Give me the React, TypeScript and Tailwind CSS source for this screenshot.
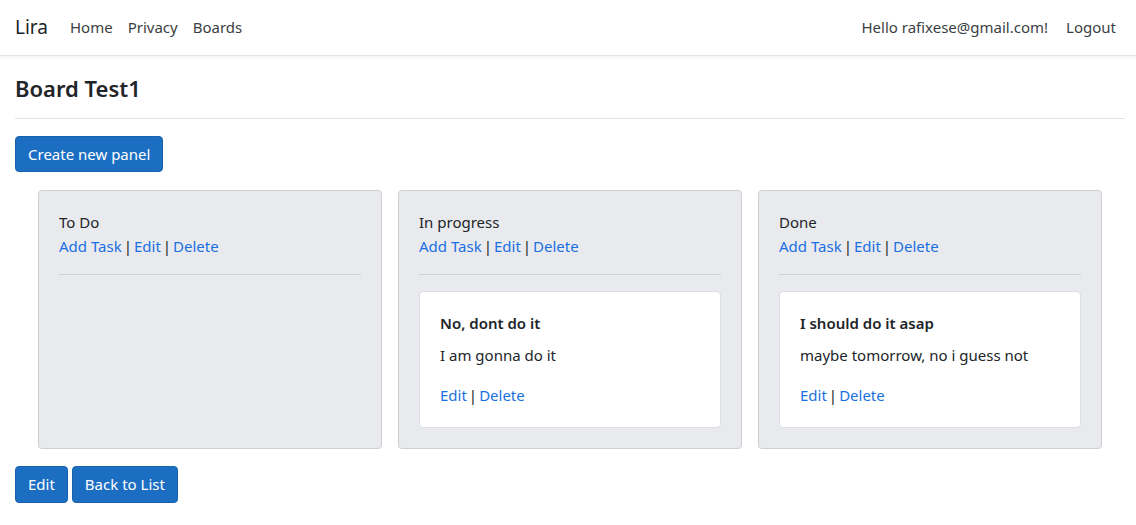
import React from "react";

type Task = { title: string; body: string };
type Panel = { name: string; tasks: Task[] };

const panels: Panel[] = [
  { name: "To Do", tasks: [] },
  { name: "In progress", tasks: [{ title: "No, dont do it", body: "I am gonna do it" }] },
  { name: "Done", tasks: [{ title: "I should do it asap", body: "maybe tomorrow, no i guess not" }] },
];

function Links({ items }: { items: string[] }) {
  return (
    <div className="leading-6">
      {items.map((t, i) => (
        <span key={t}>
          {i > 0 && <span className="text-[#212529] mx-[2px]">|</span>}
          <a className="text-[#1a6fe0] cursor-pointer">{t}</a>
        </span>
      ))}
    </div>
  );
}

function TaskCard({ task }: { task: Task }) {
  return (
    <div className="bg-white border border-[#dcdde1] rounded-[4px] px-5 pt-[19px] pb-5 flex flex-col">
      <div className="font-semibold leading-6">{task.title}</div>
      <div className="leading-6 mt-2">{task.body}</div>
      <div className="mt-4">
        <Links items={["Edit", "Delete"]} />
      </div>
    </div>
  );
}

function PanelCard({ panel }: { panel: Panel }) {
  return (
    <div className="w-[344px] h-[259px] bg-[#e9eaee] border border-[#cdcfd3] rounded-[4px] px-5 pt-[19px]">
      <div className="leading-6">{panel.name}</div>
      <Links items={["Add Task", "Edit", "Delete"]} />
      <div className="h-px bg-[#cfd1d5] mt-4 mb-4" />
      {panel.tasks.map((t) => (
        <TaskCard key={t.title} task={t} />
      ))}
    </div>
  );
}

export default function App() {
  return (
    <div className="min-h-screen bg-white text-[#212529] text-[15px] font-['Noto_Sans',sans-serif]">
      <nav className="h-14 flex items-center px-[15px] border-b border-[#e5e5e5] shadow-[0_2px_4px_rgba(0,0,0,0.05)]">
        <span className="text-[19px] mr-[22px] text-[#212529]">Lira</span>
        <div className="flex gap-[15px] text-[#3b3f44]">
          <a>Home</a>
          <a>Privacy</a>
          <a>Boards</a>
        </div>
        <div className="ml-auto flex items-center gap-[18px] pr-[5px] text-[#3b3f44]">
          <span>Hello rafixese@gmail.com!</span>
          <a>Logout</a>
        </div>
      </nav>
      <main className="px-[15px]">
        <h1 className="text-[22px] font-semibold leading-[26px] mt-[19px]">Board Test1</h1>
        <div className="h-px bg-[#e3e3e3] mt-[17px] mr-[-4px]" />
        <button className="mt-[17px] h-9 px-[12px] bg-[#1b6ec2] text-white rounded-[4px] border border-[#1861ac]">
          Create new panel
        </button>
        <div className="flex gap-4 pl-[23px] mt-[18px]">
          {panels.map((p) => (
            <PanelCard key={p.name} panel={p} />
          ))}
        </div>
        <div className="flex gap-1 mt-[17px]">
          <button className="h-[37px] px-3 bg-[#1b6ec2] text-white rounded-[4px] border border-[#1861ac]">Edit</button>
          <button className="h-[37px] px-3 bg-[#1b6ec2] text-white rounded-[4px] border border-[#1861ac]">Back to List</button>
        </div>
      </main>
    </div>
  );
}
